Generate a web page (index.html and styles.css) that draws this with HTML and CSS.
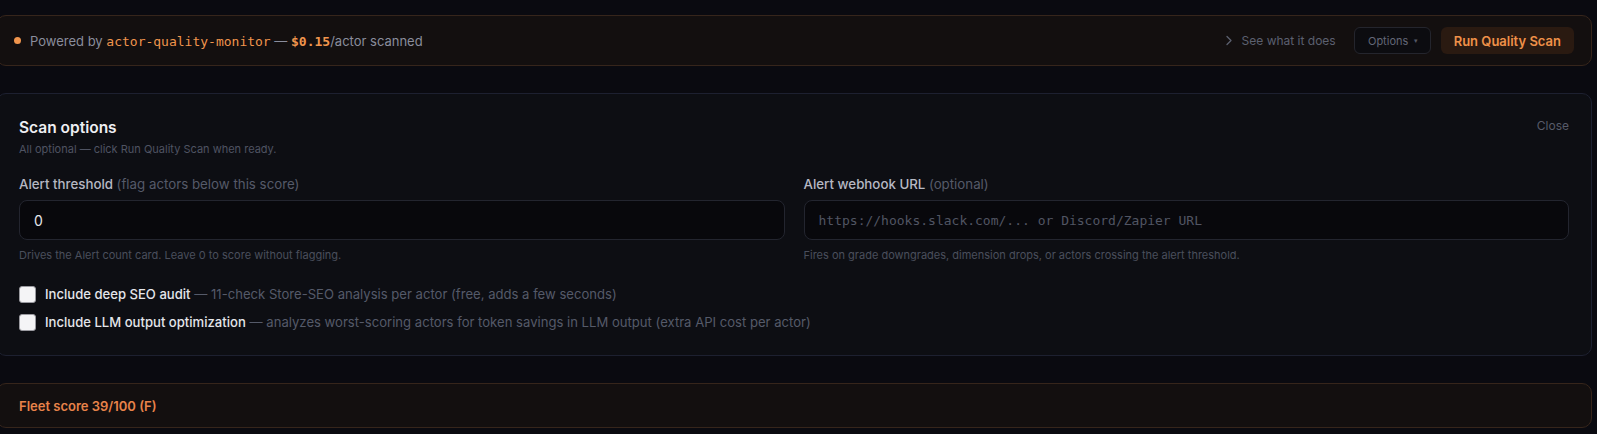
FILE: index.html
```html
<!DOCTYPE html>
<html lang="en">
<head>
<meta charset="utf-8">
<title>Actor Quality Monitor</title>
<link rel="stylesheet" href="styles.css">
</head>
<body>
<div class="wrap">
  <div class="powerbar">
    <div class="power-left">
      <span class="dot"></span>
      <span class="power-text">Powered by <code class="mono">actor-quality-monitor</code> — <code class="mono price">$0.15</code>/actor scanned</span>
    </div>
    <div class="power-right">
      <button class="see-link" type="button">
        <svg class="chev" width="8" height="11" viewBox="0 0 8 11"><path d="M2 1.5 L6 5.5 L2 9.5" fill="none" stroke="currentColor" stroke-width="1.3" stroke-linecap="round" stroke-linejoin="round"/></svg>
        <span>See what it does</span>
      </button>
      <button class="btn-options" type="button">Options <span class="caret">▾</span></button>
      <button class="btn-run" type="button">Run Quality Scan</button>
    </div>
  </div>

  <section class="card scan">
    <div class="scan-head">
      <div>
        <h2 class="scan-title">Scan options</h2>
        <p class="scan-sub">All optional — click Run Quality Scan when ready.</p>
      </div>
      <button class="btn-close" type="button">Close</button>
    </div>
    <div class="fields">
      <div class="field">
        <label class="field-label">Alert threshold <span class="muted">(flag actors below this score)</span></label>
        <input class="input" type="text" value="0">
        <p class="hint">Drives the Alert count card. Leave 0 to score without flagging.</p>
      </div>
      <div class="field">
        <label class="field-label">Alert webhook URL <span class="muted">(optional)</span></label>
        <input class="input mono-input" type="text" placeholder="https://hooks.slack.com/... or Discord/Zapier URL">
        <p class="hint">Fires on grade downgrades, dimension drops, or actors crossing the alert threshold.</p>
      </div>
    </div>
    <div class="checks">
      <label class="check"><input type="checkbox"><span class="check-main">Include deep SEO audit</span><span class="muted"> — 11-check Store-SEO analysis per actor (free, adds a few seconds)</span></label>
      <label class="check"><input type="checkbox"><span class="check-main">Include LLM output optimization</span><span class="muted"> — analyzes worst-scoring actors for token savings in LLM output (extra API cost per actor)</span></label>
    </div>
  </section>

  <section class="card fleet">
    <span class="fleet-text">Fleet score 39/100 (F)</span>
  </section>
</div>
</body>
</html>
```

FILE: styles.css
```css
* { box-sizing: border-box; }

html, body {
  margin: 0;
  padding: 0;
  background: #0a0a10;
  font-family: Inter, "Noto Sans", "Liberation Sans", sans-serif;
  color: #d8d9df;
  overflow: hidden;
}

.wrap {
  width: 1596px;
  margin-left: -4px;
  padding-top: 15px;
  display: flex;
  flex-direction: column;
  gap: 27px;
}

button {
  font-family: inherit;
  cursor: pointer;
}

.mono, .mono-input {
  font-family: "DejaVu Sans Mono", "Liberation Mono", monospace;
}

/* top bar */
.powerbar {
  height: 51px;
  border: 1px solid #36251b;
  background: #130f0f;
  border-radius: 10px;
  display: flex;
  align-items: center;
  justify-content: space-between;
  padding: 0 17px 0 17px;
}

.power-left {
  display: flex;
  align-items: center;
  gap: 9px;
}

.dot {
  width: 7px;
  height: 7px;
  border-radius: 50%;
  background: #f0954d;
}

.power-text {
  font-size: 13px;
  color: #8a8d9c;
}

.power-text .mono {
  font-size: 13px;
  color: #f0954d;
  font-weight: 400;
}

.power-text .price {
  font-weight: 700;
}

.power-right {
  display: flex;
  align-items: center;
}

.see-link {
  background: none;
  border: 0;
  padding: 0;
  display: flex;
  align-items: center;
  gap: 9px;
  color: #5c606f;
  font-size: 12px;
  margin-right: 18px;
}

.chev { color: #5c606f; }

.btn-options {
  height: 27px;
  width: 77px;
  border: 1px solid #24252d;
  background: #0c0c10;
  border-radius: 6px;
  color: #636777;
  font-size: 11px;
  padding: 0 0 0 2px;
  margin-right: 10px;
}

.caret {
  font-size: 7px;
  vertical-align: 2px;
  margin-left: 3px;
  color: #555966;
}

.btn-run {
  height: 27px;
  border: 0;
  border-radius: 6px;
  background: #2a1a11;
  color: #ef9149;
  font-size: 13px;
  font-weight: 600;
  padding: 0 13px;
}

/* cards */
.card {
  border-radius: 10px;
}

.scan {
  border: 1px solid #1d2030;
  background: #0d0e13;
  padding: 24px 22px 23px 22px;
}

.scan-head {
  display: flex;
  justify-content: space-between;
  align-items: flex-start;
}

.scan-title {
  margin: 0;
  font-size: 15.5px;
  line-height: 20px;
  font-weight: 600;
  color: #eeeef2;
}

.scan-sub {
  margin: 3px 0 0;
  font-size: 11px;
  line-height: 16px;
  color: #4f5362;
}

.btn-close {
  background: none;
  border: 0;
  color: #575b69;
  font-size: 12px;
  line-height: 16px;
  padding: 0;
  margin: 0;
}

.fields {
  margin-top: 18px;
  display: grid;
  grid-template-columns: 1fr 1fr;
  gap: 19px;
}

.field {
  display: flex;
  flex-direction: column;
}

.field-label {
  font-size: 13.3px;
  line-height: 18px;
  font-weight: 500;
  color: #b6b8c3;
}

.muted {
  color: #555a69;
  font-weight: 400;
}

.input {
  margin-top: 7px;
  height: 40px;
  border: 1px solid #23252f;
  background: #08080c;
  border-radius: 8px;
  padding: 0 14px;
  font-family: Inter, "Noto Sans", sans-serif;
  font-size: 14px;
  color: #e4e5ea;
  outline: none;
}

.mono-input {
  font-family: "DejaVu Sans Mono", "Liberation Mono", monospace;
  font-size: 13px;
}

.mono-input::placeholder {
  color: #515563;
}

.hint {
  margin: 7px 0 0;
  font-size: 11px;
  line-height: 16px;
  color: #4a4e5c;
}

.checks {
  margin-top: 21px;
  display: flex;
  flex-direction: column;
  gap: 8px;
}

.check {
  display: flex;
  align-items: center;
  height: 20px;
  font-size: 13.1px;
  white-space: pre;
}

.check input {
  appearance: none;
  -webkit-appearance: none;
  width: 17px;
  height: 17px;
  margin: 0 9px 0 0;
  background: #f4f4f6;
  border: 1px solid #9a9aa0;
  border-radius: 3px;
  flex: none;
}

.check-main {
  color: #e4e5ea;
  font-weight: 500;
}

.fleet {
  height: 45px;
  border: 1px solid #36251b;
  background: #130f0f;
  display: flex;
  align-items: center;
  padding: 0 22px;
}

.fleet-text {
  font-size: 13px;
  font-weight: 600;
  color: #e8834a;
}
```
